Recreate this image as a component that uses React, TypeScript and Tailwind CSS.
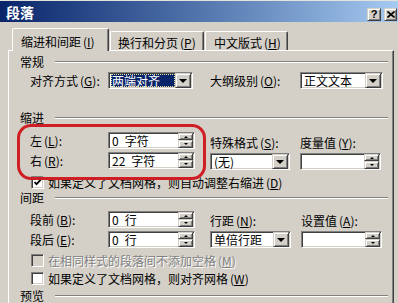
import React from 'react';

const face = "font-['Noto_Sans_CJK_SC','Noto_Sans',sans-serif]";

const sunken =
  'bg-white border border-t-[#808080] border-l-[#808080] border-b-white border-r-white shadow-[inset_1px_1px_0_#404040,inset_-1px_-1px_0_#d4d0c8]';
const raised =
  'bg-[#d4d0c8] border border-t-[#d4d0c8] border-l-[#d4d0c8] border-b-[#404040] border-r-[#404040] shadow-[inset_1px_1px_0_#fff,inset_-1px_-1px_0_#808080]';

function Key({ k }: { k: string }) {
  return (
    <span className="ml-[2px]">
      (<span className="underline underline-offset-1">{k}</span>)
    </span>
  );
}

function GroupTitle({ title }: { title: string }) {
  return (
    <div className="flex items-center h-[14px] pr-[5px]">
      <span className="text-[12px] leading-[14px]">{title}</span>
      <div className="ml-[11px] flex-1 h-[2px] border-t border-t-[#808080] border-b border-b-white" />
    </div>
  );
}

function DropButton() {
  return (
    <div className={`${raised} w-[16px] h-[15px] flex items-center justify-center shrink-0`}>
      <div className="w-0 h-0 border-x-[4px] border-x-transparent border-t-[4px] border-t-black" />
    </div>
  );
}

function Spinner() {
  return (
    <div className="flex flex-col w-[15px] shrink-0">
      <div className={`${raised} h-[7px] flex items-center justify-center`}>
        <div className="w-0 h-0 border-x-[2px] border-x-transparent border-b-[2px] border-b-black" />
      </div>
      <div className={`${raised} h-[8px] flex items-center justify-center`}>
        <div className="w-0 h-0 border-x-[2px] border-x-transparent border-t-[2px] border-t-black" />
      </div>
    </div>
  );
}

function Select({ value, width, selected }: { value: string; width: string; selected?: boolean }) {
  return (
    <div className={`${sunken} ${width} h-[17px] flex items-center p-px`}>
      <div className="flex-1 h-full flex items-center pl-px">
        {selected ? (
          <span className="h-full w-full flex items-center bg-[#0a246a] text-white outline-1 outline-dotted outline-[#e8e8a0] -outline-offset-1 pl-px text-[12px] leading-none">
            {value}
          </span>
        ) : (
          <span className="pl-px text-[12px] leading-none">{value}</span>
        )}
      </div>
      <DropButton />
    </div>
  );
}

function SpinField({ num, unit, width }: { num?: string; unit?: string; width: string }) {
  return (
    <div className={`${sunken} ${width} h-[17px] flex items-center p-px`}>
      <span className="flex-1 pl-[2px] text-[12px] leading-none whitespace-nowrap">
        {num}
        {unit && <span className="ml-[6px]">{unit}</span>}
      </span>
      <Spinner />
    </div>
  );
}

function Check({ checked, disabled }: { checked?: boolean; disabled?: boolean }) {
  return (
    <div
      className={`w-[13px] h-[13px] shrink-0 border border-t-[#808080] border-l-[#808080] border-b-white border-r-white shadow-[inset_1px_1px_0_#404040,inset_-1px_-1px_0_#d4d0c8] flex items-center justify-center ${
        disabled ? 'bg-[#d4d0c8]' : 'bg-white'
      }`}
    >
      {checked && (
        <svg width="9" height="9" viewBox="0 0 9 9">
          <path d="M1.5 4 L3.5 6.2 L7.6 1.8" fill="none" stroke="#000" strokeWidth="1.8" />
        </svg>
      )}
    </div>
  );
}

function Label({ children, width }: { children: React.ReactNode; width: string }) {
  return <span className={`${width} shrink-0 text-[12px] leading-none whitespace-nowrap`}>{children}</span>;
}

export default function App() {
  return (
    <div className={`${face} relative w-[398px] h-[303px] overflow-hidden bg-[#d4d0c8] text-black border-t border-t-[#e4e2dc]`}>
      {/* title bar */}
      <div className="h-[21px] flex items-center bg-gradient-to-r from-[#0a246a] to-[#a6caf0]">
        <span className="ml-[6px] text-[14px] font-bold text-white leading-none">段落</span>
        <div className="ml-auto mr-[1px] mt-[5px] flex gap-[3px]">
          <div className={`${raised} w-[14px] h-[13px] flex items-center justify-center text-[11px] font-bold leading-none font-['Liberation_Sans',sans-serif]`}>
            ?
          </div>
          <div className={`${raised} w-[13px] h-[13px] flex items-center justify-center`}>
            <svg width="8" height="7" viewBox="0 0 8 7">
              <path d="M0.5 0.5 L7.5 6.5 M7.5 0.5 L0.5 6.5" stroke="#000" strokeWidth="1.6" />
            </svg>
          </div>
        </div>
      </div>

      {/* tabs */}
      <div className="mt-[6px] h-[22px] pl-[12px] flex items-end text-[12px] leading-[12px]">
        <div className="relative z-10 -mb-px h-[23px] w-[97px] bg-[#d4d0c8] border-l border-t border-l-white border-t-white border-r border-r-[#404040] shadow-[inset_-1px_0_0_#808080] rounded-t-[2px] pl-[8px] pt-[7px] whitespace-nowrap">
          缩进和间距<Key k="I" />
        </div>
        <div className="ml-[1px] h-[19px] w-[94px] border-l border-t border-l-white border-t-white border-r border-r-[#404040] shadow-[inset_-1px_0_0_#808080] rounded-t-[2px] pl-[7px] pt-[5px] whitespace-nowrap">
          换行和分页<Key k="P" />
        </div>
        <div className="ml-[1px] h-[19px] w-[83px] border-l border-t border-l-white border-t-white border-r border-r-[#404040] shadow-[inset_-1px_0_0_#808080] rounded-t-[2px] pl-[8px] pt-[5px] whitespace-nowrap">
          中文版式<Key k="H" />
        </div>
      </div>

      {/* panel */}
      <div className="ml-[8px] w-[386px] h-[260px] border-t border-l border-t-white border-l-white border-r border-r-[#404040] shadow-[inset_-1px_0_0_#808080] pl-[11px] pt-[4px]">
        <GroupTitle title="常规" />
        <div className="mt-[3px] flex items-center h-[17px] pl-[10px]">
          <Label width="w-[78px]">
            对齐方式<Key k="G" />:
          </Label>
          <Select value="两端对齐" width="w-[85px]" selected />
          <Label width="ml-[17px] w-[90px]">
            大纲级别<Key k="O" />:
          </Label>
          <Select value="正文文本" width="w-[83px]" />
        </div>

        <div className="mt-[22px]">
          <GroupTitle title="缩进" />
        </div>
        <div className="mt-[7px] flex items-start pl-[10px]">
          <div className="flex flex-col gap-[3px]">
            <div className="flex items-center h-[17px]">
              <Label width="w-[78px]">
                左<Key k="L" />:
              </Label>
              <SpinField num="0" unit="字符" width="w-[87px]" />
            </div>
            <div className="flex items-center h-[17px]">
              <Label width="w-[78px]">
                右<Key k="R" />:
              </Label>
              <SpinField num="22" unit="字符" width="w-[87px]" />
            </div>
          </div>
          <div className="ml-[15px] flex gap-[10px]">
            <div className="flex flex-col">
              <div className="h-[21px] flex items-center">
                <Label width="w-[80px]">
                  特殊格式<Key k="S" />:
                </Label>
              </div>
              <Select value="(无)" width="w-[80px]" />
            </div>
            <div className="flex flex-col">
              <div className="h-[21px] flex items-center">
                <Label width="w-[81px]">
                  度量值<Key k="Y" />:
                </Label>
              </div>
              <SpinField width="w-[81px]" />
            </div>
          </div>
        </div>
        <div className="mt-[6px] h-[13px] flex items-center pl-[11px]">
          <Check checked />
          <span className="ml-[4px] text-[12px] leading-none whitespace-nowrap">
            如果定义了文档网格，则自动调整右缩进<Key k="D" />
          </span>
        </div>

        <div className="mt-[2px]">
          <GroupTitle title="间距" />
        </div>
        <div className="mt-[6px] flex items-start pl-[10px]">
          <div className="flex flex-col gap-[3px]">
            <div className="flex items-center h-[17px]">
              <Label width="w-[78px]">
                段前<Key k="B" />:
              </Label>
              <SpinField num="0" unit="行" width="w-[87px]" />
            </div>
            <div className="flex items-center h-[17px]">
              <Label width="w-[78px]">
                段后<Key k="E" />:
              </Label>
              <SpinField num="0" unit="行" width="w-[87px]" />
            </div>
          </div>
          <div className="ml-[15px] flex gap-[10px]">
            <div className="flex flex-col">
              <div className="h-[20px] flex items-center">
                <Label width="w-[81px]">
                  行距<Key k="N" />:
                </Label>
              </div>
              <Select value="单倍行距" width="w-[81px]" />
            </div>
            <div className="flex flex-col">
              <div className="h-[20px] flex items-center">
                <Label width="w-[81px]">
                  设置值<Key k="A" />:
                </Label>
              </div>
              <SpinField width="w-[81px]" />
            </div>
          </div>
        </div>
        <div className="mt-[6px] h-[13px] flex items-center pl-[11px]">
          <Check disabled />
          <span className="ml-[4px] text-[12px] leading-none whitespace-nowrap text-[#808080] [text-shadow:1px_1px_0_#fff]">
            在相同样式的段落间不添加空格<Key k="M" />
          </span>
        </div>
        <div className="mt-[5px] h-[13px] flex items-center pl-[11px]">
          <Check />
          <span className="ml-[4px] text-[12px] leading-none whitespace-nowrap">
            如果定义了文档网格，则对齐网格<Key k="W" />
          </span>
        </div>
        <div className="mt-[4px]">
          <GroupTitle title="预览" />
        </div>
      </div>

      {/* red annotation ring */}
      <div className="absolute left-[17px] top-[123px] w-[189px] h-[56px] border-[3px] border-[#d01e25] rounded-[14px] pointer-events-none" />
    </div>
  );
}
